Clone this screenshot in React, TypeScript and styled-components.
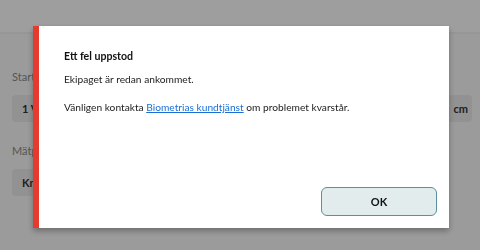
import React from "react";
import styled, { createGlobalStyle } from "styled-components";

const Global = createGlobalStyle`
  html, body { margin: 0; padding: 0; }
  body {
    background: #ffffff;
    font-family: Lato, "Open Sans", sans-serif;
    width: 480px;
    height: 250px;
    overflow: hidden;
  }
`;

const Page = styled.div`
  width: 480px;
  height: 250px;
  background: #fafafa;
  display: flex;
  flex-direction: column;
`;

const Header = styled.div`
  height: 32px;
  border-bottom: 2px solid #f2f2f2;
  background: #ffffff;
`;

const Form = styled.div`
  display: flex;
  flex-direction: column;
  padding: 36px 8px 0 12px;
`;

const Label = styled.div`
  font-size: 11px;
  color: #8a8a8a;
  height: 15px;
  margin-bottom: 10px;
`;

const Row = styled.div`
  display: flex;
  justify-content: space-between;
  margin-bottom: 22px;
`;

const Field = styled.div<{ $w: number }>`
  width: ${(p) => p.$w}px;
  height: 27px;
  box-sizing: border-box;
  background: #ececec;
  border-radius: 4px;
  display: flex;
  align-items: center;
  padding: 0 10px;
  font-size: 11px;
  font-weight: 700;
  color: #333;
`;

const FieldRight = styled(Field)`
  justify-content: flex-end;
  padding: 0 4px;
`;

const Overlay = styled.div`
  position: fixed;
  inset: 0;
  background: rgba(0, 0, 0, 0.38);
`;

const Dialog = styled.div`
  position: fixed;
  left: 33px;
  top: 26px;
  width: 416px;
  height: 202px;
  box-sizing: border-box;
  background: #ffffff;
  border-left: 6px solid #e8392f;
  box-shadow: 0 3px 6px rgba(0, 0, 0, 0.3);
  display: flex;
  flex-direction: column;
  padding: 22px 12px 12px 25px;
`;

const Title = styled.div`
  font-size: 10.6px;
  font-weight: 700;
  color: #111;
  line-height: 16px;
  margin-bottom: 7px;
`;

const Text = styled.p`
  margin: 0 0 12px 0;
  font-size: 10.2px;
  color: #222;
  line-height: 16px;
`;

const Link = styled.a`
  color: #1a6fd6;
  text-decoration: underline;
`;

const Footer = styled.div`
  margin-top: auto;
  display: flex;
  justify-content: flex-end;
`;

const Button = styled.button`
  width: 116px;
  height: 29px;
  box-sizing: border-box;
  border: 1.5px solid #5e8f9c;
  border-radius: 6px;
  background: #e2eced;
  font-family: Lato, "Open Sans", sans-serif;
  font-size: 11px;
  font-weight: 700;
  color: #111;
  cursor: pointer;
`;

export default function App() {
  return (
    <>
      <Global />
      <Page>
        <Header />
        <Form>
          <Label>Startplats</Label>
          <Row>
            <Field $w={300}>1 Vänster</Field>
            <FieldRight $w={140}>cm</FieldRight>
          </Row>
          <Label>Mätplats</Label>
          <Row>
            <Field $w={300}>Kniv</Field>
          </Row>
        </Form>
      </Page>
      <Overlay />
      <Dialog role="alertdialog">
        <Title>Ett fel uppstod</Title>
        <Text>Ekipaget är redan ankommet.</Text>
        <Text>
          Vänligen kontakta <Link href="#">Biometrias kundtjänst</Link> om problemet kvarstår.
        </Text>
        <Footer>
          <Button>OK</Button>
        </Footer>
      </Dialog>
    </>
  );
}
